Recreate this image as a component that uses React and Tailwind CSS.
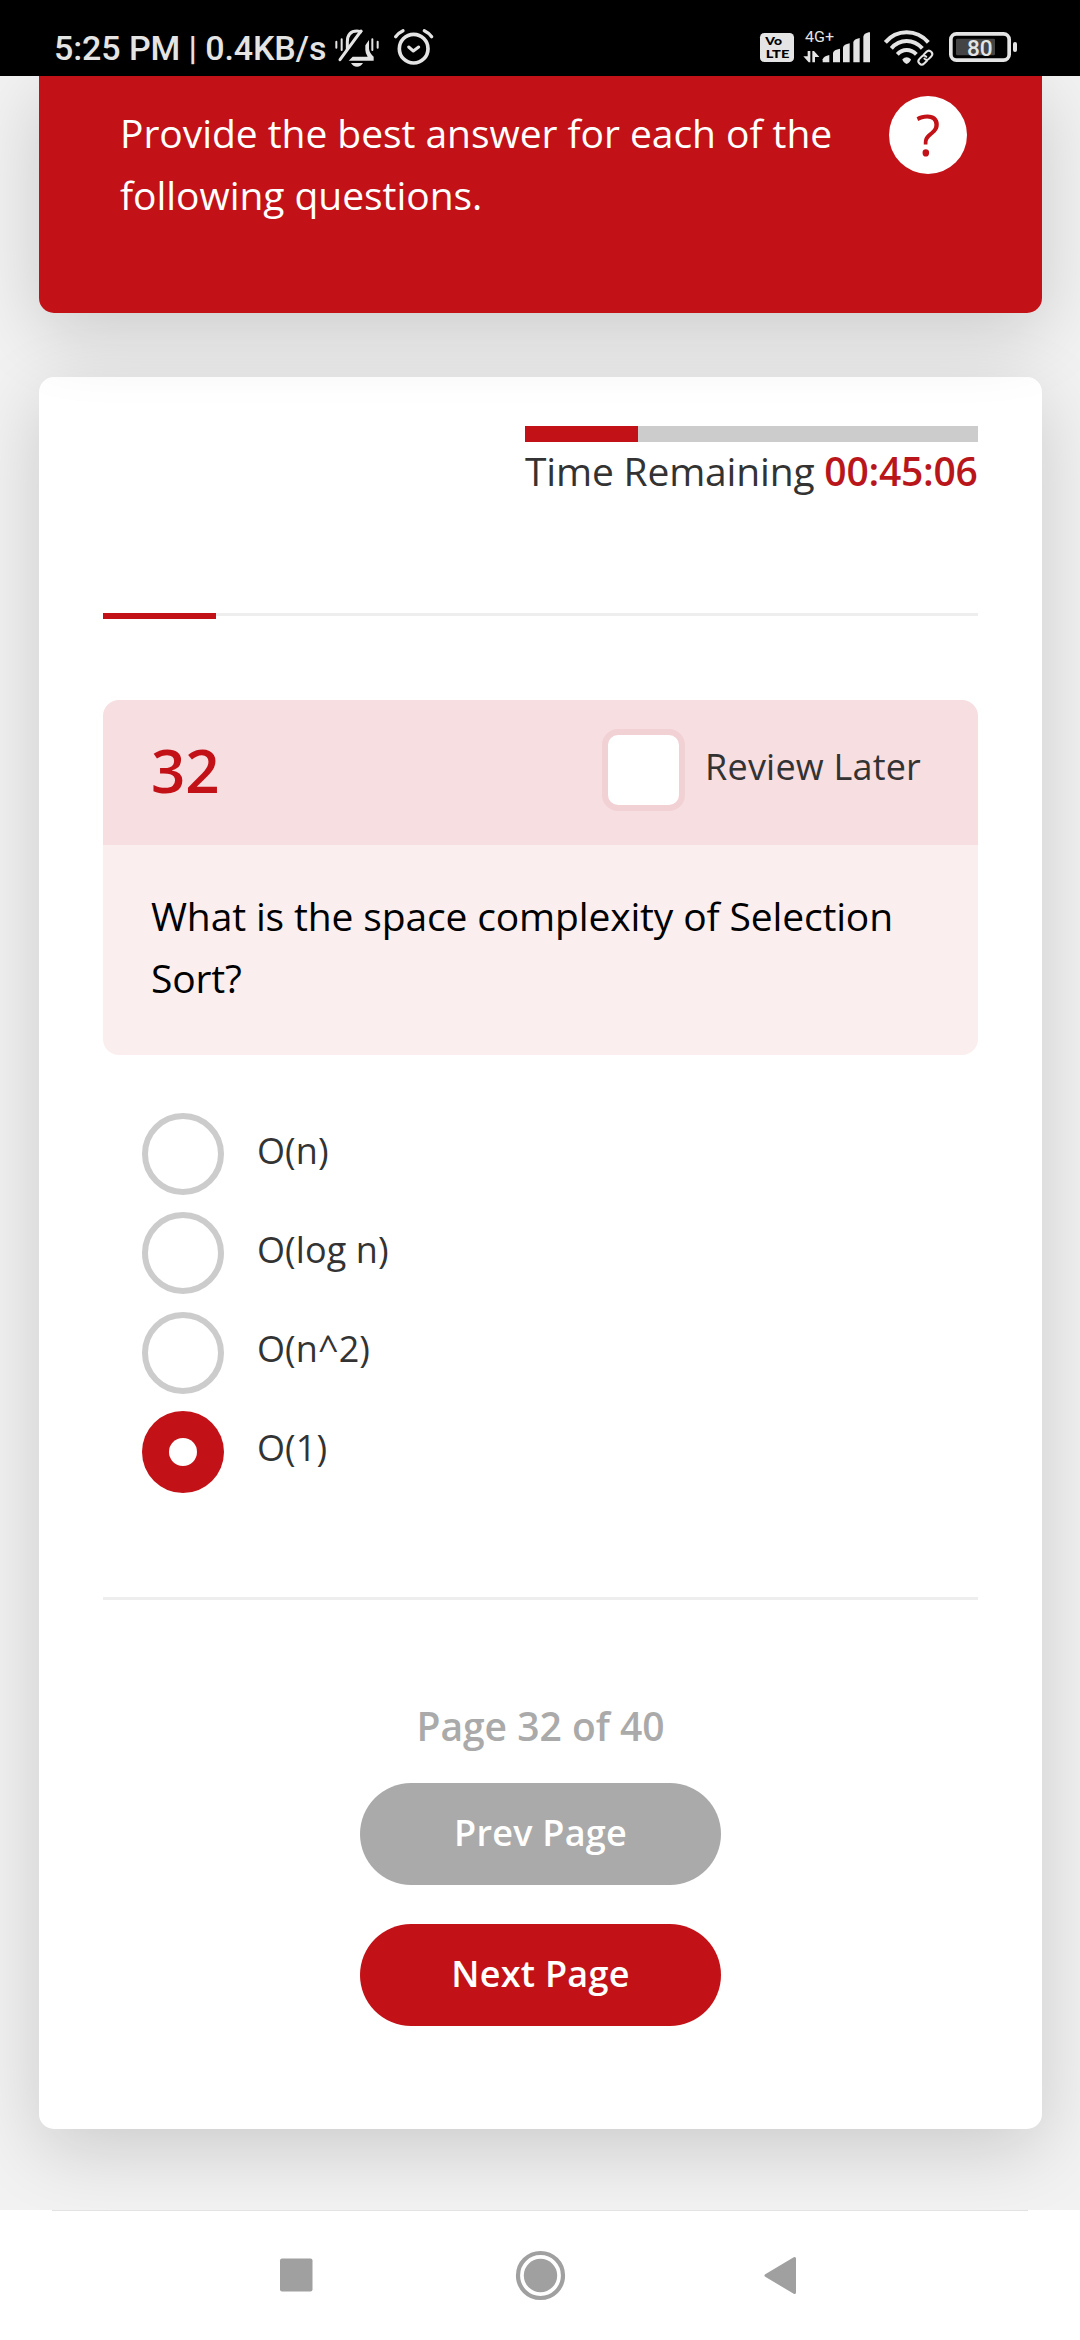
import React from "react";

const ICON = "#e4e4e4";

function MutedBellIcon() {
  return (
    <svg className="h-[60px] w-[56px]" viewBox="36 0 168 180" fill="none" stroke={ICON}>
      <path d="M82 102V78Q82 45 111 45Q120 45 126 49" strokeWidth="9" />
      <path d="M60 131L123 45" strokeWidth="9" strokeLinecap="round" />
      <path d="M136 88L147 72V98Q148 110 161 122V134H86L98 122H143Q136 112 136 102Z" fill={ICON} stroke="none" />
      <path d="M93 141H129Q123 152 111 152Q99 152 93 141Z" fill={ICON} stroke="none" />
      <path d="M49 77V95M65 70V102M157 70V102M173 77V95" strokeWidth="6" strokeLinecap="round" />
    </svg>
  );
}

function AlarmIcon() {
  return (
    <svg className="h-[60px] w-[62px]" viewBox="204 0 186 180" fill="none" stroke={ICON} strokeLinecap="round" strokeLinejoin="round">
      <circle cx="281" cy="98" r="43" strokeWidth="11" />
      <path d="M266 93L280 105L296 93" strokeWidth="9" />
      <path d="M227 62Q236 50 249 44M313 44Q326 50 335 62" strokeWidth="10" />
    </svg>
  );
}

function VolteIcon() {
  return (
    <svg className="h-[60px] w-[50px]" viewBox="0 0 150 180">
      <rect x="30" y="51" width="102" height="87" rx="13" fill={ICON} />
      <g fill="#000" fontFamily="Lato, 'Open Sans', sans-serif" fontWeight="900">
        <text x="46" y="88" fontSize="31" textLength="50" lengthAdjust="spacingAndGlyphs">Vo</text>
        <text x="47" y="126" fontSize="36" textLength="71" lengthAdjust="spacingAndGlyphs">LTE</text>
      </g>
    </svg>
  );
}

function SignalIcon() {
  return (
    <svg className="h-[60px] w-[80px]" viewBox="150 0 240 180" fill={ICON}>
      <text x="165" y="78" fontSize="45" fontFamily="Roboto, sans-serif" textLength="87" lengthAdjust="spacingAndGlyphs">4G+</text>
      <path d="M173 105H181V139H176L160 121H173Z" />
      <path d="M187 139V105H192L208 123H195V139Z" />
      <path d="M218 139V130Q222 120 238 117V139Z" />
      <path d="M249 139V110Q251 101 270 98V139Z" />
      <path d="M279 139V94Q281 85 299 82V139Z" />
      <path d="M310 139V78Q312 69 329 66V139Z" />
      <path d="M340 139V62Q342 52 356 49H360V139Z" />
    </svg>
  );
}

function WifiIcon() {
  return (
    <svg className="h-[60px] w-[60px]" viewBox="390 0 180 180" fill="none" stroke={ICON}>
      <path d="M406 79Q432 49 470 49Q508 49 535 79" strokeWidth="12" />
      <path d="M424 97Q443 75 470 75Q497 75 517 97" strokeWidth="12" />
      <path d="M442 115Q454 102 470 102Q486 102 499 115" strokeWidth="12" />
      <path d="M457 130Q470 118 483 130Q482 138 470 144Q458 138 457 130Z" fill={ICON} stroke="none" />
      <g transform="rotate(-45 526 125)">
        <rect x="493" y="110" width="66" height="30" rx="14" fill="#000" stroke="none" />
        <path d="M523 135H511Q501 135 501 125Q501 115 511 115H521Q530 115 530 125" strokeWidth="6" strokeLinecap="round" />
        <path d="M529 115H541Q551 115 551 125Q551 135 541 135H531Q522 135 522 125" strokeWidth="6" strokeLinecap="round" />
      </g>
    </svg>
  );
}

function BatteryIcon() {
  return (
    <svg className="h-[60px] w-[90px]" viewBox="570 0 270 180">
      <rect x="602.500" y="53.500" width="175" height="79" rx="17" fill="none" stroke={ICON} strokeWidth="11" />
      <rect x="618" y="68" width="117" height="50" rx="4" fill="#444" />
      <rect x="789" y="78" width="12" height="30" rx="6" fill={ICON} />
      <text x="651" y="119" fontSize="67" fontWeight="500" fontFamily="Roboto, sans-serif" fill={ICON} textLength="77" lengthAdjust="spacingAndGlyphs">80</text>
    </svg>
  );
}

function StatusBar() {
  return (
    <div className="flex h-[76px] w-full shrink-0 items-start bg-black">
      <div className="ml-[54px] mt-[28px] w-[278px] whitespace-nowrap font-['Roboto',sans-serif] text-[34px] font-medium leading-[40px] tracking-[-0.1px] text-[#e4e4e4]">
        5:25 PM | 0.4KB/s
      </div>
      <div className="mt-4 flex">
        <MutedBellIcon />
        <AlarmIcon />
      </div>
      <div className="ml-auto mr-[50px] mt-4 flex">
        <VolteIcon />
        <SignalIcon />
        <WifiIcon />
        <BatteryIcon />
      </div>
    </div>
  );
}

function Intro() {
  return (
    <header className="relative z-10 flex h-[237px] items-start justify-between rounded-b-[15px] bg-[#c21217] pl-[81px] pr-[75px] text-white shadow-[0_20px_75px_rgba(0,0,0,0.165)]">
      <p className="mt-[26px] text-[39px] leading-[62.4px] tracking-[-0.05px]">
        Provide the best answer for each of the
        <br />
        following questions.
      </p>
      <button className="mt-5 flex size-[78px] items-center justify-center rounded-full bg-white pb-[2px] text-[57px] leading-none text-[#c21217]">
        ?
      </button>
    </header>
  );
}

function Timer() {
  return (
    <div className="ml-auto w-[453px]">
      <div className="h-4 bg-[#ccc]">
        <div className="h-full w-1/4 bg-[#c21217]" />
      </div>
      <div className="whitespace-nowrap text-[39px] leading-[57px] tracking-[-0.18px]">
        Time Remaining <span className="font-semibold tracking-[-0.25px] text-[#b9161b]">00:45:06</span>
      </div>
    </div>
  );
}

function Question() {
  return (
    <section className="mt-[81px] overflow-hidden rounded-2xl">
      <div className="flex h-[145px] items-center bg-[#f6dee1] pb-[5px] pl-12 pr-[57px]">
        <span className="text-[60px] font-semibold leading-none text-[#c21217]">32</span>
        <label className="ml-auto flex items-center">
          <span className="h-[82px] w-[83px] rounded-[16px] border-[6px] border-[#f2d1d4] bg-white" />
          <span className="ml-5 pb-[6px] text-[36px] tracking-[0.2px]">Review Later</span>
        </label>
      </div>
      <p className="h-[210px] bg-[#faeeee] pl-12 pt-10 text-[39px] leading-[62.4px] tracking-[-0.15px] text-black">
        What is the space complexity of Selection
        <br />
        Sort?
      </p>
    </section>
  );
}

function Option({ label, checked }) {
  return (
    <label className="flex h-[82px] items-center">
      {checked ? (
        <span className="flex size-[82px] items-center justify-center rounded-full bg-[#c21217]">
          <span className="size-7 rounded-full bg-white" />
        </span>
      ) : (
        <span className="size-[82px] rounded-full border-[6px] border-[#ccc]" />
      )}
      <span className="ml-[33px] pb-[7px] text-[36px] tracking-[0.1px]">{label}</span>
    </label>
  );
}

function Pager() {
  return (
    <div className="mt-[99px] flex flex-col items-center">
      <div className="text-[39px] font-semibold leading-[54px] text-[#aaa]">Page 32 of 40</div>
      <button className="mt-[30px] h-[102px] w-[361px] rounded-full bg-[#aaa] pb-[2px] text-[36px] font-semibold tracking-[0.25px] text-white">
        Prev Page
      </button>
      <button className="mt-[39px] h-[102px] w-[361px] rounded-full bg-[#c21217] pb-[2px] text-[36px] font-semibold tracking-[0.25px] text-white">
        Next Page
      </button>
    </div>
  );
}

function NavBar() {
  return (
    <nav className="h-[130px] shrink-0 bg-white">
      <div className="mx-[52px] h-px bg-[#e3e3e3]" />
      <div className="flex justify-center">
        <svg className="h-[129px] w-[244px]" viewBox="174 2211 244 129">
          <rect x="280" y="2258.500" width="32.500" height="33" rx="2" fill="#a0a0a0" />
        </svg>
        <svg className="h-[129px] w-[244px]" viewBox="418 2211 244 129">
          <circle cx="540.500" cy="2275.500" r="22.500" fill="none" stroke="#a0a0a0" strokeWidth="4.200" />
          <circle cx="540.500" cy="2275.500" r="16.700" fill="#a0a0a0" />
        </svg>
        <svg className="h-[129px] w-[244px]" viewBox="662 2211 244 129">
          <path d="M766 2275.500L794.500 2258.500V2292.500Z" fill="#a0a0a0" stroke="#a0a0a0" strokeWidth="3" strokeLinejoin="round" />
        </svg>
      </div>
    </nav>
  );
}

export default function App() {
  return (
    <div className="flex h-[2340px] w-[1080px] flex-col overflow-hidden font-['Open_Sans',sans-serif] text-[#333]">
      <StatusBar />
      <main className="h-[2134px] shrink-0 overflow-hidden bg-[#f2f2f2] pl-[39px] pr-[38px]">
        <Intro />
        <div className="mt-16 h-[1752px] rounded-[15px] bg-white px-16 pt-[49px] shadow-[0_20px_75px_rgba(0,0,0,0.165)]">
          <Timer />
          <div className="mt-[114px] h-[6px] border-t-[3px] border-[#eee]">
            <div className="-mt-[3px] h-[6px] w-[113px] bg-[#c21217]" />
          </div>
          <Question />
          <div className="ml-[39px] mt-[58px] flex flex-col gap-[17.33px]">
            <Option label="O(n)" />
            <Option label="O(log n)" />
            <Option label="O(n^2)" />
            <Option label="O(1)" checked />
          </div>
          <div className="mt-[104px] h-[3px] bg-[#eee]" />
          <Pager />
        </div>
      </main>
      <NavBar />
    </div>
  );
}
